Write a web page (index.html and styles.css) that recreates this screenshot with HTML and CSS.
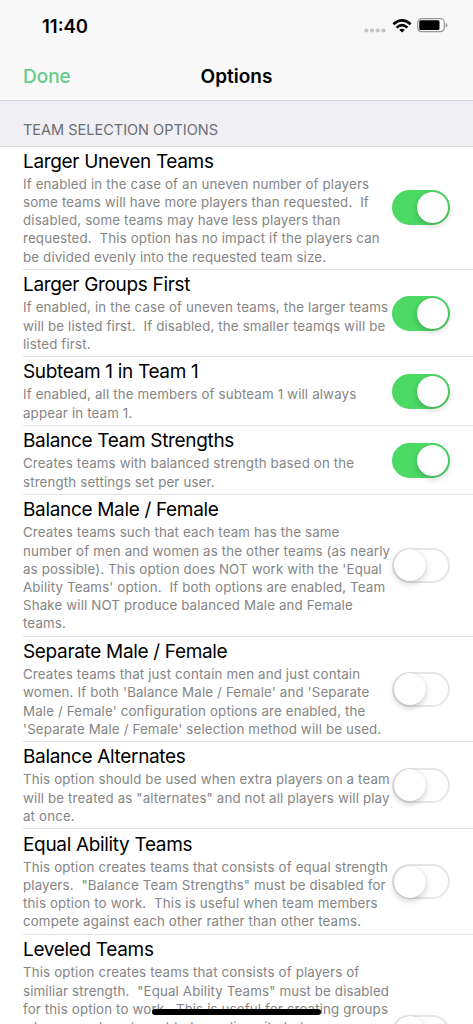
FILE: index.html
```html
<!DOCTYPE html>
<html lang="en">
<head>
  <meta charset="UTF-8">
  <meta name="viewport" content="width=device-width, initial-scale=1.0">
  <title>Options</title>
  <link rel="stylesheet" href="styles.css">
</head>
<body>

  <!-- Header -->
  <div class="header">
    <div class="status-bar">
      <span class="time">11:40</span>
      <div class="status-icons">
        <svg class="signal" width="22" height="5" viewBox="0 0 22 5" fill="#c4c4c6">
          <circle cx="2.3" cy="2.5" r="2.1"/>
          <circle cx="8" cy="2.5" r="2.1"/>
          <circle cx="13.7" cy="2.5" r="2.1"/>
          <circle cx="19.4" cy="2.5" r="2.1"/>
        </svg>
        <svg class="wifi" width="20" height="14" viewBox="0 0 20 14" fill="none" stroke="#000" stroke-width="2.6">
          <path d="M1.4 5.2 Q10 -2.4 18.6 5.2"/>
          <path d="M4.6 8.6 Q10 3.8 15.4 8.6"/>
          <path d="M10 13.6 L7.2 10.8 Q10 8.6 12.8 10.8 Z" fill="#000" stroke="none"/>
        </svg>
        <svg class="battery" width="31" height="15" viewBox="0 0 31 15">
          <rect x="0.7" y="0.7" width="26.6" height="13" rx="4" fill="none" stroke="#98989a" stroke-width="1.2"/>
          <rect x="2.3" y="2.3" width="20.2" height="9.8" rx="1.5" fill="#000"/>
          <path d="M28.7 5 Q30.4 5.6 30.4 7.2 Q30.4 8.8 28.7 9.4 Z" fill="#98989a"/>
        </svg>
      </div>
    </div>
    <div class="nav-bar">
      <a class="done">Done</a>
      <h1>Options</h1>
    </div>
  </div>

  <!-- Options -->
  <h2 class="section-title">TEAM SELECTION OPTIONS</h2>
  <div class="options">
    <div class="option">
      <div class="option-text">
        <h3>Larger Uneven Teams</h3>
        <p>If enabled in the case of an uneven number of players
some teams will have more players than requested.  If
disabled, some teams may have less players than
requested.  This option has no impact if the players can
be divided evenly into the requested team size.</p>
      </div>
      <span class="switch on"></span>
    </div>
    <div class="option">
      <div class="option-text">
        <h3>Larger Groups First</h3>
        <p>If enabled, in the case of uneven teams, the larger teams
will be listed first.  If disabled, the smaller teamqs will be
listed first.</p>
      </div>
      <span class="switch on"></span>
    </div>
    <div class="option">
      <div class="option-text">
        <h3>Subteam 1 in Team 1</h3>
        <p>If enabled, all the members of subteam 1 will always
appear in team 1.</p>
      </div>
      <span class="switch on"></span>
    </div>
    <div class="option">
      <div class="option-text">
        <h3>Balance Team Strengths</h3>
        <p>Creates teams with balanced strength based on the
strength settings set per user.</p>
      </div>
      <span class="switch on"></span>
    </div>
    <div class="option">
      <div class="option-text">
        <h3>Balance Male / Female</h3>
        <p>Creates teams such that each team has the same
number of men and women as the other teams (as nearly
as possible). This option does NOT work with the 'Equal
Ability Teams' option.  If both options are enabled, Team
Shake will NOT produce balanced Male and Female
teams.</p>
      </div>
      <span class="switch"></span>
    </div>
    <div class="option">
      <div class="option-text">
        <h3>Separate Male / Female</h3>
        <p>Creates teams that just contain men and just contain
women. If both 'Balance Male / Female' and 'Separate
Male / Female' configuration options are enabled, the
'Separate Male / Female' selection method will be used.</p>
      </div>
      <span class="switch"></span>
    </div>
    <div class="option">
      <div class="option-text">
        <h3>Balance Alternates</h3>
        <p>This option should be used when extra players on a team
will be treated as "alternates" and not all players will play
at once.</p>
      </div>
      <span class="switch"></span>
    </div>
    <div class="option">
      <div class="option-text">
        <h3>Equal Ability Teams</h3>
        <p>This option creates teams that consists of equal strength
players.  "Balance Team Strengths" must be disabled for
this option to work.  This is useful when team members
compete against each other rather than other teams.</p>
      </div>
      <span class="switch"></span>
    </div>
    <div class="option last">
      <div class="option-text">
        <h3>Leveled Teams</h3>
        <p>This option creates teams that consists of players of
similiar strength.  "Equal Ability Teams" must be disabled
for this option to work.  This is useful for creating groups
where you do not want to have diversity but</p>
      </div>
      <span class="switch"></span>
    </div>
  </div>

  <div class="home-indicator"></div>

</body>
</html>
```

FILE: styles.css
```css
html {
  overflow: hidden;
}

body {
  font-family: Inter, "Liberation Sans", sans-serif;
  margin: 0;
  height: 1024px;
  overflow: hidden;
  background-color: #fff;
  color: #000;
}

h1, h2, h3, p {
  margin: 0;
  font-weight: 400;
}

/* Header */
.header {
  height: 100px;
  background-color: #f8f8f8;
  border-bottom: 1px solid #d3d3d6;
}

.status-bar {
  display: flex;
  justify-content: space-between;
  height: 51px;
  padding: 0 25px 0 42px;
}

.time {
  font-size: 18.5px;
  font-weight: 600;
  line-height: 53px;
}

.status-icons {
  display: flex;
  align-items: flex-start;
  padding-top: 18px;
}

.signal {
  margin: 10px 6px 0 0;
}

.wifi {
  margin: 1px 5px 0 0;
}

.nav-bar {
  display: grid;
  grid-template-columns: 1fr auto 1fr;
  align-items: center;
  padding: 1px 23px;
  height: 48px;
  font-size: 19px;
}

.nav-bar h1 {
  font-size: 19px;
  font-weight: 600;
}

.done {
  color: #66cc8a;
  font-weight: 500;
}

.section-title {
  height: 45px;
  padding-left: 23px;
  background-color: #efeff4;
  border-bottom: 1px solid #dcdce0;
  color: #6d6d72;
  font-size: 14.5px;
  line-height: 57px;
}

/* Option rows */
.options {
  margin-top: -0.5px;
}

.option {
  display: flex;
  align-items: center;
  justify-content: space-between;
  margin-left: 23px;
  padding-right: 23px;
  border-bottom: 1px solid #e2e2e4;
}

.option h3 {
  padding-top: 2.3px;
  font-size: 19px;
  line-height: 26px;
  letter-spacing: -0.33px;
}

.option p {
  width: 360px;
  padding-bottom: 3.3px;
  color: #858585;
  font-size: 13.3px;
  line-height: 18.19px;
  letter-spacing: 0.15px;
  white-space: pre;
}

/* the last row runs on below the screen */
.option.last {
  align-items: flex-start;
  height: 196px;
}

.option.last .option-text {
  padding-top: 0.5px;
}

.option.last .switch {
  margin-top: 80px;
}

.switch {
  flex: none;
  box-sizing: border-box;
  width: 58px;
  height: 35px;
  border: 2px solid #e5e5e5;
  border-radius: 18px;
}

.switch::before {
  content: "";
  display: block;
  width: 32px;
  height: 32px;
  margin: -0.5px 0 0 -0.5px;
  border-radius: 50%;
  background-color: #fff;
  box-shadow: 0 3px 6px rgba(0, 0, 0, 0.18), 0 0 1px rgba(0, 0, 0, 0.2);
}

.switch.on {
  background-color: #4cd964;
  border-color: #4cd964;
}

.switch.on::before {
  width: 31px;
  height: 31px;
  margin: 0 0 0 22.5px;
}

.home-indicator {
  position: fixed;
  left: 152px;
  bottom: 9px;
  width: 169px;
  height: 6px;
  border-radius: 3px;
  background-color: #000;
}
```
